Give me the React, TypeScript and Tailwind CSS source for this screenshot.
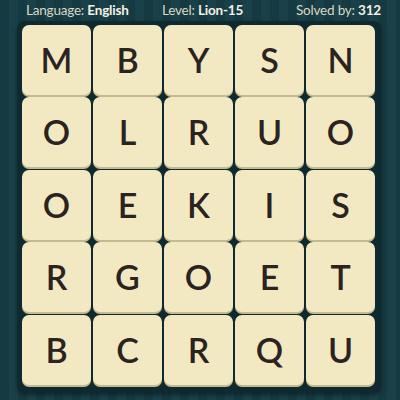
const ROWS = [
  ['M', 'B', 'Y', 'S', 'N'],
  ['O', 'L', 'R', 'U', 'O'],
  ['O', 'E', 'K', 'I', 'S'],
  ['R', 'G', 'O', 'E', 'T'],
  ['B', 'C', 'R', 'Q', 'U'],
];

export default function App() {
  return (
    <div
      className="w-[400px] h-[400px] overflow-hidden flex flex-col bg-[repeating-linear-gradient(90deg,#163a41_0px,#163a41_9px,#1a4149_9px,#1a4149_18px)]"
      style={{ fontFamily: 'Lato, "Noto Sans", sans-serif' }}
    >
      {/* header */}
      <div className="h-[21px] flex items-center pl-[26px] text-[13.5px] text-[#d9d6c3] leading-none tracking-[-0.2px]">
        <span className="w-[136px]">
          Language: <b className="font-bold text-[#f4f1e4]">English</b>
        </span>
        <span className="w-[134px]">
          Level: <b className="font-bold text-[#f4f1e4]">Lion-15</b>
        </span>
        <span>
          Solved by: <b className="font-bold text-[#f4f1e4]">312</b>
        </span>
      </div>

      {/* board */}
      <div className="ml-[17px] w-[364px] h-[372px] rounded-[8px] bg-[#0e2a30] pt-[4px] pl-[5px] shadow-[0_2px_4px_rgba(0,0,0,0.4)]">
        <div className="grid grid-cols-[repeat(5,69px)] grid-rows-[repeat(5,70px)] gap-x-[2px] gap-y-[2.4px]">
          {ROWS.flat().map((ch, i) => (
            <div
              key={i}
              className="rounded-[7px] bg-[#f2e9c3] flex items-center justify-center shadow-[0_2px_0_#c4b98f] text-[34px] font-semibold text-[#2a231f] leading-none"
            >
              {ch}
            </div>
          ))}
        </div>
      </div>
    </div>
  );
}
